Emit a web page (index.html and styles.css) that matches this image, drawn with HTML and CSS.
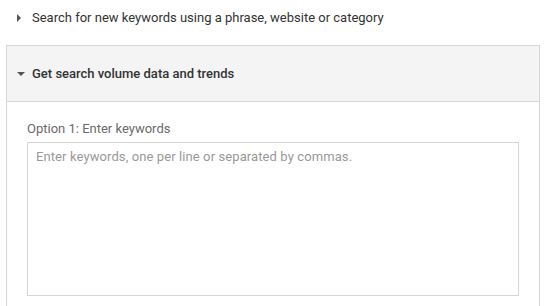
FILE: index.html
```html
<!DOCTYPE html>
<html>
<head>
<meta charset="utf-8">
<link rel="stylesheet" href="styles.css">
</head>
<body>
<div class="page">
  <div class="toggle-row">
    <span class="tri tri-right"></span>
    <span class="toggle-text">Search for new keywords using a phrase, website or category</span>
  </div>
  <div class="panel">
    <div class="panel-head">
      <span class="tri tri-down"></span>
      <span class="panel-title">Get search volume data and trends</span>
    </div>
    <div class="panel-body">
      <label class="field-label" for="kw">Option 1: Enter keywords</label>
      <textarea id="kw" class="kw-input" placeholder="Enter keywords, one per line or separated by commas."></textarea>
    </div>
  </div>
</div>
</body>
</html>
```
FILE: styles.css
```css
html, body {
  margin: 0;
  padding: 0;
  background: #fff;
  font-family: Roboto, "Liberation Sans", Arial, sans-serif;
  overflow: hidden;
}
.page {
  padding: 0 10px 0 6px;
}
.toggle-row {
  display: flex;
  align-items: center;
  height: 35px;
  padding-left: 10px;
  margin-bottom: 10px;
}
.tri {
  display: inline-block;
  width: 0;
  height: 0;
}
.tri-right {
  border-top: 4px solid transparent;
  border-bottom: 4px solid transparent;
  border-left: 4px solid #555;
  margin-right: 11px;
  margin-left: 1px;
}
.tri-down {
  border-left: 4px solid transparent;
  border-right: 4px solid transparent;
  border-top: 4px solid #555;
  margin-right: 7px;
}
.toggle-text {
  font-size: 13px;
  color: #333;
}
.panel {
  border: 1px solid #d6d6d6;
  border-bottom: none;
  height: 261px;
  box-sizing: border-box;
}
.panel-head {
  display: flex;
  align-items: center;
  height: 55px;
  padding-left: 10px;
  background: #f4f4f4;
  border-bottom: 1px solid #d6d6d6;
}
.panel-title {
  font-size: 13px;
  font-weight: 500;
  color: #333;
}
.panel-body {
  padding: 19px 20px 0 20px;
  display: flex;
  flex-direction: column;
}
.field-label {
  font-size: 13px;
  line-height: 16px;
  color: #6a6a6a;
  margin-bottom: 5px;
}
.kw-input {
  width: 100%;
  box-sizing: border-box;
  height: 154px;
  border: 1px solid #d6d6d6;
  border-radius: 0;
  padding: 6px 8px;
  font-family: Roboto, "Liberation Sans", Arial, sans-serif;
  font-size: 13px;
  letter-spacing: 0.1px;
  resize: none;
  outline: none;
  margin: 0;
}
.kw-input::placeholder {
  color: #999;
}
```
